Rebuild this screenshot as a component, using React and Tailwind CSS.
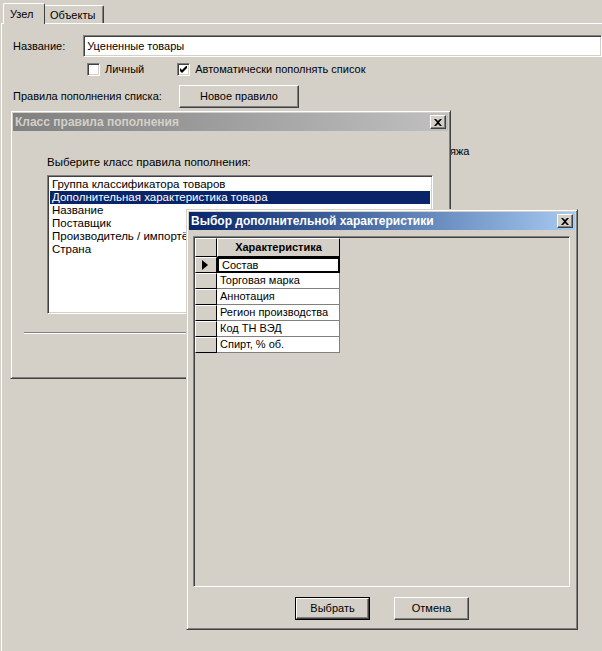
import React from 'react';

const raised =
  'border border-t-white border-l-white border-r-[#404040] border-b-[#404040] shadow-[inset_-1px_-1px_#808080]';
const sunken =
  'border border-t-[#808080] border-l-[#808080] border-r-white border-b-white shadow-[inset_1px_1px_#404040,inset_-1px_-1px_#d4d0c8]';
const frame =
  'border border-t-[#d4d0c8] border-l-[#d4d0c8] border-r-[#404040] border-b-[#404040] shadow-[inset_1px_1px_white,inset_-1px_-1px_#808080] p-[2px]';

const CloseButton = () => (
  <div className={`w-[16px] h-[14px] bg-[#d4d0c8] flex items-center justify-center ${raised}`}>
    <svg width="8" height="7" viewBox="0 0 8 7">
      <path d="M0 0h2l2 2 2-2h2L5 3.5 8 7H6L4 5 2 7H0l3-3.5z" fill="black" />
    </svg>
  </div>
);

const Checkbox = ({ checked, label }) => (
  <label className="flex items-center gap-[5px]">
    <span className={`w-[13px] h-[13px] bg-white flex items-center justify-center ${sunken}`}>
      {checked && (
        <svg width="7" height="7" viewBox="0 0 7 7">
          <path d="M0 2v3l2 2 5-5V-1L2 4z" fill="black" />
        </svg>
      )}
    </span>
    <span>{label}</span>
  </label>
);

const TitleBar = ({ title, active }) => (
  <div
    className={`h-[18px] flex items-center justify-between pl-[2px] pr-[2px] font-bold text-[12px] ${
      active
        ? 'bg-gradient-to-r from-[#0a246a] to-[#a6caf0] text-white'
        : 'bg-gradient-to-r from-[#808080] to-[#c0c0c0] text-[#d4d0c8]'
    }`}
  >
    <span>{title}</span>
    <CloseButton />
  </div>
);

const ruleClasses = [
  'Группа классификатора товаров',
  'Дополнительная характеристика товара',
  'Название',
  'Поставщик',
  'Производитель / импортёр',
  'Страна',
];

const features = ['Состав', 'Торговая марка', 'Аннотация', 'Регион производства', 'Код ТН ВЭД', 'Спирт, % об.'];

const gridRaised =
  'border border-t-white border-l-white border-r-black border-b-black bg-[#d4d0c8]';

export default function App() {
  return (
    <div
      className="relative w-[602px] h-[651px] overflow-hidden bg-[#d4d0c8] text-black text-[11px] leading-[13px]"
      style={{ fontFamily: '"Liberation Sans", Arial, sans-serif' }}
    >
      {/* Tabs */}
      <div className="flex items-end h-[23px] pl-[3px]">
        <div className="h-[21px] w-[42px] border-t border-l border-r border-t-white border-l-white border-r-[#404040] rounded-t-[2px] pl-[6px] pt-[4px] relative top-px bg-[#d4d0c8] z-10">
          Узел
        </div>
        <div className="h-[18px] w-[59px] border-t border-r border-t-white border-r-[#404040] shadow-[inset_-1px_0_#808080] rounded-tr-[2px] pl-[5px] pt-[3px]">
          Объекты
        </div>
      </div>

      {/* Tab page */}
      <div className="ml-px border-t border-l border-t-white border-l-white h-[628px]">
        <div className="flex items-center mt-[11px] h-[22px]">
          <span className="w-[84px] pl-[11px]">Название:</span>
          <div className={`h-[22px] w-[540px] bg-white flex items-center pl-[3px] ${sunken}`}>Уцененные товары</div>
        </div>
        <div className="flex items-center mt-[6px] h-[13px] pl-[85px] gap-[33px]">
          <Checkbox label="Личный" />
          <Checkbox checked label="Автоматически пополнять список" />
        </div>
        <div className="flex items-center mt-[9px] h-[23px]">
          <span className="w-[177px] pl-[11px]">Правила пополнения списка:</span>
          <button className={`h-[23px] w-[120px] bg-[#d4d0c8] ${raised}`}>Новое правило</button>
        </div>
      </div>

      {/* text partially hidden behind dialog */}
      <span className="absolute left-[444px] top-[145px]">ряжа</span>

      {/* Dialog 1 */}
      <div className={`absolute left-[10px] top-[110px] w-[441px] h-[269px] bg-[#d4d0c8] ${frame}`}>
        <TitleBar title="Класс правила пополнения" />
        <div className="pl-[34px] pt-[24px]">
          <div className="text-[11.5px] leading-[14px]">Выберите класс правила пополнения:</div>
          <div className={`mt-[6px] w-[386px] h-[139px] bg-white p-[2px] text-[11.5px] leading-[13px] ${sunken}`}>
            {ruleClasses.map((c, i) => (
              <div key={c} className={`pl-[2px] h-[13px] ${i === 1 ? 'bg-[#0a246a] text-white' : ''}`}>
                {c}
              </div>
            ))}
          </div>
        </div>
        <div className="ml-[11px] mt-[18px] w-[404px] h-[2px] border-t border-t-[#808080] border-b border-b-white" />
      </div>

      {/* Dialog 2 */}
      <div className={`absolute left-[186px] top-[209px] w-[392px] h-[421px] bg-[#d4d0c8] flex flex-col ${frame}`}>
        <TitleBar title="Выбор дополнительной характеристики" active />
        <div className={`ml-[4px] mt-[6px] w-[377px] h-[351px] ${sunken} p-[1px]`}>
          <div className="flex">
            <div className={`w-[22px] h-[19px] ${gridRaised}`} />
            <div className={`w-[123px] h-[19px] ${gridRaised} font-bold flex items-center justify-center`}>
              Характеристика
            </div>
          </div>
          {features.map((f, i) => (
            <div key={f} className="flex">
              <div className={`w-[22px] h-[16px] ${gridRaised} flex items-center pl-[6px]`}>
                {i === 0 && (
                  <svg width="6" height="10" viewBox="0 0 6 10">
                    <path d="M0 0l6 5-6 5z" fill="black" />
                  </svg>
                )}
              </div>
              <div
                className={`w-[123px] h-[16px] bg-white flex items-center pl-[3px] ${
                  i === 0 ? 'border-2 border-black pl-[2px]' : 'border-r border-b border-r-[#808080] border-b-[#808080]'
                }`}
              >
                {f}
              </div>
            </div>
          ))}
        </div>
        <div className="flex mt-[10px] pl-[106px] gap-[24px]">
          <button className="h-[23px] w-[75px] border border-black bg-[#d4d0c8]">
            <div className={`h-full w-full flex items-center justify-center ${raised}`}>Выбрать</div>
          </button>
          <button className={`h-[23px] w-[75px] bg-[#d4d0c8] ${raised}`}>Отмена</button>
        </div>
      </div>
    </div>
  );
}
